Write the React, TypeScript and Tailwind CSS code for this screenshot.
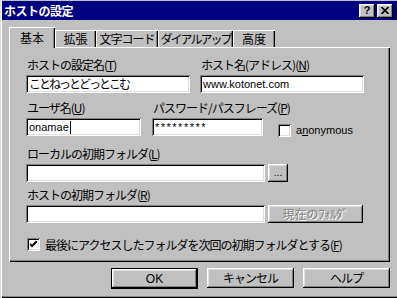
import React from "react";

const jp = "font-['Noto_Sans_CJK_JP',sans-serif]";
const en = "font-['Liberation_Sans','Noto_Sans_CJK_JP',sans-serif]";
const raised =
  "shadow-[inset_-1px_-1px_0_#000,inset_1px_1px_0_#fff,inset_-2px_-2px_0_#808080,inset_2px_2px_0_#dfdfdf]";
const sunken =
  "shadow-[inset_1px_1px_0_#808080,inset_-1px_-1px_0_#fff,inset_2px_2px_0_#000,inset_-2px_-2px_0_#dfdfdf]";

// Label with underlined access key, e.g. ホスト名(N)
const Label = ({ text, hotkey }: { text: string; hotkey: string }) => (
  <div className={`h-[14px] pl-[1px] text-[12px] leading-[14px] tracking-[-1px] text-black whitespace-nowrap ${jp}`}>
    {text}(<u>{hotkey}</u>)
  </div>
);

const Input = ({ children }: { children?: React.ReactNode }) => (
  <div className={`mt-[3px] flex h-[18px] w-full items-center overflow-hidden bg-white pl-[3px] ${sunken}`}>
    {children}
  </div>
);

const Checkbox = ({ checked }: { checked?: boolean }) => (
  <div className={`flex h-[13px] w-[13px] shrink-0 items-center justify-center bg-white ${sunken}`}>
    {checked && (
      <svg width="7" height="7" viewBox="0 0 7 7">
        <path d="M0 3 L2 5 L7 0" stroke="#000" strokeWidth="2" fill="none" />
      </svg>
    )}
  </div>
);

const tabEdge = "shadow-[inset_1px_1px_0_#fff,inset_-1px_0_0_#000,inset_-2px_0_0_#808080]";

const App = () => {
  return (
    <div className="h-[298px] w-[397px] overflow-hidden bg-[#c0c0c0] pl-[2px] pt-[1px] shadow-[inset_1px_0_0_#dfdfdf,inset_2px_0_0_#fff,inset_0_-1px_0_#000,inset_0_-2px_0_#808080]">
      {/* Title bar */}
      <div className="flex h-[19px] items-center justify-between bg-[#000080] pl-[2px] pr-[4px]">
        <span className={`text-[12px] font-bold tracking-[-0.5px] text-white ${jp}`}>ホストの設定</span>
        <div className="flex gap-[2px]">
          <div className={`flex h-[14px] w-[16px] items-center justify-center bg-[#c0c0c0] ${raised}`}>
            <span className={`text-[11px] font-bold leading-none text-black ${en}`}>?</span>
          </div>
          <div className={`flex h-[14px] w-[16px] items-center justify-center bg-[#c0c0c0] ${raised}`}>
            <svg width="8" height="7" viewBox="0 0 8 7">
              <path d="M0.5 0 L7.5 7 M7.5 0 L0.5 7" stroke="#000" strokeWidth="1.6" />
            </svg>
          </div>
        </div>
      </div>

      {/* Tabs */}
      <div className={`ml-[7px] mt-[7px] flex h-[20px] items-end whitespace-nowrap text-[12px] text-black ${jp}`}>
        <div className={`relative z-10 -mb-[1px] flex h-[21px] w-[46px] items-center justify-center bg-[#c0c0c0] pt-[1px] ${tabEdge}`}>
          基本
        </div>
        <div className={`flex h-[17px] w-[41px] items-center justify-center bg-[#c0c0c0] ${tabEdge}`}>拡張</div>
        <div className={`flex h-[17px] w-[62px] items-center justify-center bg-[#c0c0c0] tracking-[-1px] ${tabEdge}`}>
          文字コード
        </div>
        <div className={`flex h-[17px] w-[75px] items-center justify-center bg-[#c0c0c0] tracking-[-2px] ${tabEdge}`}>
          ダイアルアップ
        </div>
        <div className={`flex h-[17px] w-[42px] items-center justify-center bg-[#c0c0c0] ${tabEdge}`}>高度</div>
      </div>

      {/* Tab panel */}
      <div className="ml-[7px] flex h-[215px] w-[381px] flex-col pl-[17px] pt-[11px] shadow-[inset_1px_1px_0_#fff,inset_-1px_-1px_0_#000,inset_-2px_-2px_0_#808080]">
        <div className="grid grid-cols-[164px_164px] gap-x-[10px]">
          <div className="min-w-0">
            <Label text="ホストの設定名" hotkey="T" />
            <Input>
              <span className={`whitespace-nowrap text-[12px] tracking-[-2px] text-black ${jp}`}>ことねっとどっとこむ</span>
            </Input>
          </div>
          <div className="min-w-0">
            <Label text="ホスト名(アドレス)" hotkey="N" />
            <Input>
              <span className={`text-[11px] text-black ${en}`}>www.kotonet.com</span>
            </Input>
          </div>
        </div>

        <div className="mt-[8px] grid grid-cols-[115px_111px_auto] items-start gap-x-[11px]">
          <div className="min-w-0">
            <Label text="ユーザ名" hotkey="U" />
            <Input>
              <span className={`text-[11px] text-black ${en}`}>onamae</span>
              <span className="ml-[1px] h-[13px] w-[1px] bg-black" />
            </Input>
          </div>
          <div className="min-w-0">
            <Label text="パスワード/パスフレーズ" hotkey="P" />
            <Input>
              <span className={`text-[11px] tracking-[1.5px] text-black ${en}`}>*********</span>
            </Input>
          </div>
          <div className="ml-[4px] mt-[21px] flex items-center gap-[5px]">
            <Checkbox />
            <span className={`text-[11px] text-black ${en}`}>
              a<u>n</u>onymous
            </span>
          </div>
        </div>

        <div className="mt-[8px]">
          <Label text="ローカルの初期フォルダ" hotkey="L" />
          <div className="grid grid-cols-[239px_20px] gap-x-[3px]">
            <Input />
            <div className={`mt-[3px] flex h-[18px] items-center justify-center bg-[#c0c0c0] text-[10px] text-black ${en} ${raised}`}>
              ...
            </div>
          </div>
        </div>

        <div className="mt-[6px]">
          <Label text="ホストの初期フォルダ" hotkey="R" />
          <div className="grid grid-cols-[239px_95px] gap-x-[3px]">
            <Input />
            <div className={`mt-[3px] flex h-[18px] items-center justify-center bg-[#c0c0c0] text-[12px] text-[#808080] [text-shadow:1px_1px_0_#fff] ${jp} ${raised}`}>
              現在のﾌｫﾙﾀﾞ
            </div>
          </div>
        </div>

        <div className="ml-[1px] mt-[15px] flex h-[14px] items-center gap-[5px]">
          <Checkbox checked />
          <span className={`text-[12px] leading-[14px] tracking-[-1px] text-black ${jp}`}>
            最後にアクセスしたフォルダを次回の初期フォルダとする(<u>F</u>)
          </span>
        </div>
      </div>

      {/* Dialog buttons */}
      <div className="mt-[6px] flex justify-end gap-[9px] pr-[7px]">
        <div className="h-[21px] w-[87px] bg-black p-[1px]">
          <div className={`flex h-full w-full items-center justify-center bg-[#c0c0c0] text-[12px] text-black ${en} ${raised}`}>
            OK
          </div>
        </div>
        <div className={`flex h-[20px] w-[87px] items-center justify-center bg-[#c0c0c0] text-[12px] tracking-[-1px] text-black ${jp} ${raised}`}>
          キャンセル
        </div>
        <div className={`flex h-[20px] w-[87px] items-center justify-center bg-[#c0c0c0] text-[12px] tracking-[-1px] text-black ${jp} ${raised}`}>
          ヘルプ
        </div>
      </div>
    </div>
  );
};

export default App;
